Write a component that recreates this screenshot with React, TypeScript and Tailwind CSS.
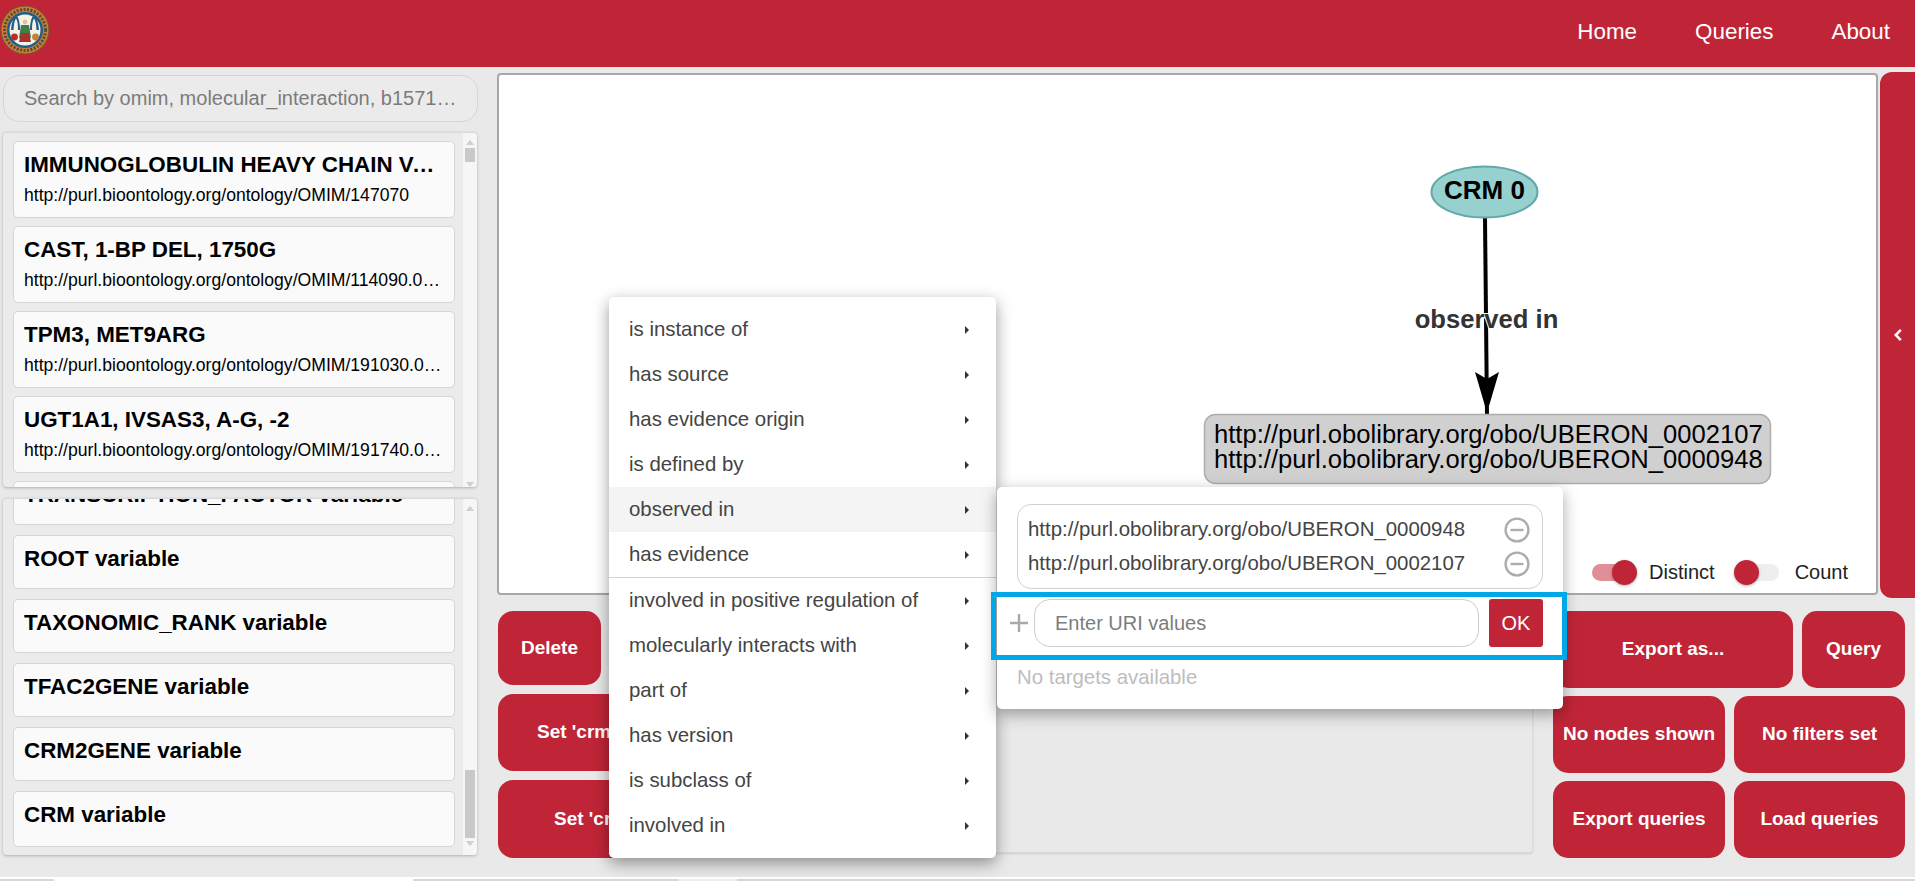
const menuTop = ["is instance of", "has source", "has evidence origin", "is defined by", "observed in", "has evidence"];
const menuBottom = [
  "involved in positive regulation of",
  "molecularly interacts with",
  "part of",
  "has version",
  "is subclass of",
  "involved in",
];

const ontologyItems = [
  { title: "IMMUNOGLOBULIN HEAVY CHAIN VARIABLE REGION", uri: "http://purl.bioontology.org/ontology/OMIM/147070" },
  { title: "CAST, 1-BP DEL, 1750G", uri: "http://purl.bioontology.org/ontology/OMIM/114090.0003" },
  { title: "TPM3, MET9ARG", uri: "http://purl.bioontology.org/ontology/OMIM/191030.0001" },
  { title: "UGT1A1, IVSAS3, A-G, -2", uri: "http://purl.bioontology.org/ontology/OMIM/191740.0008" },
];

const variables = ["ROOT", "TAXONOMIC_RANK", "TFAC2GENE", "CRM2GENE"];

const Logo = () => (
  <svg width="50" height="50" viewBox="0 0 50 50" className="mt-[-8px] shrink-0">
    <circle cx="25" cy="25" r="24" fill="#c4803a" stroke="#7d5228" strokeWidth="1" />
    <circle cx="25" cy="25" r="20.5" fill="none" stroke="#5c4a30" strokeWidth="3" strokeDasharray="2 1.5" />
    <circle cx="25" cy="25" r="18" fill="#1d5f8a" />
    <circle cx="25" cy="25" r="15.5" fill="#f6f2e6" />
    <path d="M11 25 Q12 13 16 10 Q20 13 20 25 Z" fill="#1d5f8a" />
    <path d="M30 25 Q30 13 34 10 Q38 13 39 25 Z" fill="#1d5f8a" />
    <path d="M13.5 25 Q14 16 16 13.5 Q18 16 18 25 Z" fill="#f6f2e6" />
    <path d="M32 25 Q32 16 34 13.5 Q36 16 36.5 25 Z" fill="#f6f2e6" />
    <circle cx="25" cy="17" r="2.4" fill="#e6c39a" />
    <path d="M21 20 L29 20 L31 33 L19 33 Z" fill="#3f7d4a" />
    <path d="M21 28 L29 28 L31 37 L19 37 Z" fill="#a8322e" />
    <circle cx="14.5" cy="32" r="3.4" fill="#b5302c" />
    <circle cx="35.5" cy="32" r="3.4" fill="#c4803a" />
  </svg>
);

const Scrollbar = ({ thumb, spacer }: { thumb: string; spacer: string }) => (
  <div className="w-[14px] shrink-0 bg-[#f6f6f6] flex flex-col items-center">
    <svg width="8" height="5" viewBox="0 0 8 5" className="mt-[7px] shrink-0">
      <path d="M4 0 L8 5 L0 5 Z" fill="#cfcfcf" />
    </svg>
    <div className={"w-[10px] bg-[#c9c9c9] shrink-0 " + thumb}></div>
    <div className={spacer}></div>
    <svg width="8" height="5" viewBox="0 0 8 5" className="shrink-0">
      <path d="M0 0 L8 0 L4 5 Z" fill="#cfcfcf" />
    </svg>
  </div>
);

const RedButton = ({ label, className }: { label: string; className: string }) => (
  <button className={"bg-[#c02537] text-white font-bold text-[19px] rounded-[15px] " + className}>{label}</button>
);

const Toggle = ({ on }: { on: boolean }) => (
  <div className="relative w-[45px] h-[25px] shrink-0">
    <div
      className={
        on
          ? "absolute left-0 top-[4px] w-[42px] h-[17px] rounded-full bg-[#e08e98]"
          : "absolute right-0 top-[4px] w-[42px] h-[17px] rounded-full bg-[#eeeeee]"
      }
    ></div>
    <div
      className={
        on
          ? "absolute right-0 top-0 w-[25px] h-[25px] rounded-full bg-[#c02537] shadow-[0_1px_3px_rgba(0,0,0,0.3)]"
          : "absolute left-0 top-0 w-[25px] h-[25px] rounded-full bg-[#c02537] shadow-[0_1px_3px_rgba(0,0,0,0.3)]"
      }
    ></div>
  </div>
);

const MenuRow = ({ label, active }: { label: string; active?: boolean }) => (
  <div
    className={
      active
        ? "h-[45px] flex items-center justify-between pl-[20px] pr-[27px] bg-[#f4f4f4]"
        : "h-[45px] flex items-center justify-between pl-[20px] pr-[27px]"
    }
  >
    <span>{label}</span>
    <svg width="4" height="8" viewBox="0 0 4 8">
      <path d="M0 0 L4 4 L0 8 Z" fill="#333333" />
    </svg>
  </div>
);

const MinusCircle = () => (
  <svg width="26" height="26" viewBox="0 0 26 26" fill="none" stroke="#adadad" strokeWidth="2.4">
    <circle cx="13" cy="13" r="11.4" />
    <path d="M6.5 13 H19.5" />
  </svg>
);

const Graph = () => (
  <svg width="1377" height="518" viewBox="499 75 1377 518" className="block">
    <path d="M1485 218 L1487 415" stroke="#000000" strokeWidth="4" fill="none" />
    <path d="M1475 372 L1487 379 L1499 372 L1489 406 L1485 406 Z" fill="#000000" />
    <ellipse cx="1484.5" cy="192" rx="53" ry="25.5" fill="#96d1d0" stroke="#62a8a7" strokeWidth="2" />
    <text x="1484.5" y="199" textAnchor="middle" fontSize="26" fontWeight="700" fill="#000000" fontFamily="'Liberation Sans', Arial, sans-serif">
      CRM 0
    </text>
    <text
      x="1486.5"
      y="328"
      textAnchor="middle"
      fontSize="25.6"
      fontWeight="700"
      fill="#333333"
      stroke="#ffffff"
      strokeWidth="2"
      paintOrder="stroke"
      fontFamily="'Liberation Sans', Arial, sans-serif"
    >
      observed in
    </text>
    <rect x="1204.5" y="414.5" width="566" height="69" rx="11" fill="#d0d0d0" stroke="#adadad" strokeWidth="1.5" />
    <text x="1214" y="443" fontSize="25.6" fill="#000000" fontFamily="'Liberation Sans', Arial, sans-serif">
      http://purl.obolibrary.org/obo/UBERON_0002107
    </text>
    <text x="1214" y="468" fontSize="25.6" fill="#000000" fontFamily="'Liberation Sans', Arial, sans-serif">
      http://purl.obolibrary.org/obo/UBERON_0000948
    </text>
  </svg>
);

export default function App() {
  return (
    <div className="relative w-[1915px] h-[881px] overflow-hidden bg-[#e9e9e9] font-['Liberation_Sans',Arial,sans-serif] text-black">
      <header className="h-[67px] bg-[#c02537] flex items-center justify-between pr-[25px]">
        <Logo />
        <nav className="flex gap-[58px] text-white text-[22.4px] mt-[-3px]">
          <a>Home</a>
          <a>Queries</a>
          <a>About</a>
        </nav>
      </header>

      <div className="h-[810px] flex">
        {/* left column: search + two lists */}
        <aside className="w-[497px] shrink-0 pl-[3px] pr-[20px] pt-[8px] flex flex-col">
          <input
            readOnly
            placeholder="Search by omim, molecular_interaction, b1571…"
            className="h-[47px] w-[475px] rounded-[16px] border border-[#d6d6d6] bg-[#ebebeb] pl-[20px] pr-[8px] text-[20px] outline-none placeholder:text-[#7b7b7b]"
          />
          <div className="mt-[10px] h-[355px] flex rounded-[4px] border-t border-[#dadada] bg-[#ebebeb] shadow-[0_1px_3px_rgba(0,0,0,0.25)] overflow-hidden">
            <div className="flex-1 min-w-0 pl-[10px] pr-[8px] pt-[8px] flex flex-col gap-[8px] overflow-hidden">
              {ontologyItems.map((item) => (
                <div
                  key={item.uri}
                  className="h-[77px] shrink-0 rounded-[5px] border border-[#d5d5d5] bg-[#fafafa] px-[10px] pt-[10px]"
                >
                  <div className="truncate text-[22.4px] font-bold leading-[26px]">{item.title}</div>
                  <div className="truncate mt-[5px] text-[17.6px] leading-[24px]">{item.uri}</div>
                </div>
              ))}
              <div className="h-[77px] shrink-0 rounded-[5px] border border-[#d5d5d5] bg-[#fafafa]"></div>
            </div>
            <Scrollbar thumb="mt-[3px] h-[14px]" spacer="flex-1" />
          </div>

          <div className="mt-[11px] h-[357px] flex rounded-[4px] border-t border-[#dadada] bg-[#ebebeb] shadow-[0_1px_3px_rgba(0,0,0,0.25)] overflow-hidden">
            <div className="flex-1 min-w-0 pl-[10px] pr-[8px] flex flex-col gap-[10px] overflow-hidden">
              <div className="mt-[-28px] h-[54px] shrink-0 rounded-[5px] border border-[#d5d5d5] bg-[#fafafa] px-[10px] pt-[10px] text-[22.4px] font-bold leading-[26px]">
                TRANSCRIPTION_FACTOR variable
              </div>
              {variables.map((name) => (
                <div
                  key={name}
                  className="h-[54px] shrink-0 rounded-[5px] border border-[#d5d5d5] bg-[#fafafa] px-[10px] pt-[10px] text-[22.4px] font-bold leading-[26px]"
                >
                  {name} variable
                </div>
              ))}
              <div className="h-[56px] shrink-0 rounded-[5px] border border-[#d5d5d5] bg-[#fafafa] px-[10px] pt-[10px] text-[22.4px] font-bold leading-[26px]">
                CRM variable
              </div>
            </div>
            <Scrollbar thumb="mt-[259px] h-[68px]" spacer="mt-[3px]" />
          </div>
        </aside>

        {/* graph + buttons */}
        <main className="flex-1 min-w-0 flex flex-col">
          <div className="h-[538px] shrink-0 flex items-start pt-[5px]">
            <div className="relative mt-[1px] w-[1381px] h-[522px] box-border rounded-[4px] border-2 border-[#a8a8a8] bg-white">
              <Graph />
              <div className="absolute right-[28px] bottom-[8px] flex items-center text-[20px] leading-[25px] text-[#222222]">
                <Toggle on />
                <span className="ml-[12px] mr-[19px]">Distinct</span>
                <Toggle on={false} />
                <span className="ml-[16px]">Count</span>
              </div>
            </div>
            <div className="ml-[2px] w-[35px] h-[526px] rounded-l-[12px] bg-[#c02537] flex items-center justify-center">
              <svg width="18" height="18" viewBox="0 0 16 16" fill="none" stroke="#ffffff" strokeWidth="2.2">
                <path d="M10.5 3.5 L6 8 L10.5 12.5" />
              </svg>
            </div>
          </div>

          <div className="flex items-start">
            <div className="ml-[1px] w-[210px] shrink-0 pt-[6px] flex flex-col">
              <RedButton label="Delete" className="h-[74px] w-[103px]" />
              <RedButton label="Set 'crm' as subject" className="mt-[9px] h-[77px] w-full text-left pl-[39px] whitespace-nowrap overflow-hidden" />
              <RedButton label="Set 'crm' as object" className="mt-[9px] h-[78px] w-full text-left pl-[56px] whitespace-nowrap overflow-hidden" />
            </div>
            <div className="ml-[8px] w-[817px] h-[248px] shrink-0 rounded-[4px] border border-[#dcdcdc] bg-[#e9e9e9] shadow-[0_1px_2px_rgba(0,0,0,0.12)]"></div>
            <div className="ml-[20px] w-[352px] shrink-0 pt-[6px] flex flex-col gap-[8px]">
              <div className="flex gap-[9px]">
                <RedButton label="Export as..." className="h-[77px] w-[240px]" />
                <RedButton label="Query" className="h-[77px] w-[103px]" />
              </div>
              <div className="flex gap-[9px]">
                <RedButton label="No nodes shown" className="h-[77px] w-[172px] whitespace-nowrap" />
                <RedButton label="No filters set" className="h-[77px] w-[171px]" />
              </div>
              <div className="flex gap-[9px]">
                <RedButton label="Export queries" className="h-[77px] w-[172px]" />
                <RedButton label="Load queries" className="h-[77px] w-[171px]" />
              </div>
            </div>
          </div>
        </main>
      </div>

      {/* bottom edge of the page below */}
      <div className="h-[4px] border-t-2 border-white bg-gradient-to-r from-[#d6d6d6] via-[#d8d6da] to-[#ded4d0] flex">
        <div className="ml-[54px] w-[359px] bg-white"></div>
        <div className="ml-[265px] w-[59px] bg-[#eeeeee]"></div>
      </div>

      {/* context menu */}
      <div className="absolute left-[609px] top-[297px] w-[387px] h-[561px] rounded-[5px] bg-white pt-[10px] text-[20.4px] text-[#444444] shadow-[0_5px_16px_rgba(0,0,0,0.4)]">
        {menuTop.map((m) => (
          <MenuRow key={m} label={m} active={m === "observed in"} />
        ))}
        <div className="h-px bg-[#d4d4d4]"></div>
        {menuBottom.map((m) => (
          <MenuRow key={m} label={m} />
        ))}
      </div>

      {/* submenu for "observed in" */}
      <div className="absolute left-[997px] top-[487px] w-[566px] h-[222px] rounded-[5px] bg-white px-[20px] pt-[17px] text-[20.4px] text-[#444444] shadow-[0_5px_16px_rgba(0,0,0,0.35)]">
        <div className="h-[85px] rounded-[14px] border border-[#d2d2d2] flex flex-col justify-center pl-[10px] pr-[12px]">
          <div className="h-[34px] flex items-center justify-between">
            <span>http://purl.obolibrary.org/obo/UBERON_0000948</span>
            <MinusCircle />
          </div>
          <div className="h-[34px] flex items-center justify-between">
            <span>http://purl.obolibrary.org/obo/UBERON_0002107</span>
            <MinusCircle />
          </div>
        </div>
        <div className="mt-[10px] flex items-center">
          <svg width="18" height="18" viewBox="0 0 18 18" stroke="#a9a9a9" strokeWidth="2.4" className="ml-[-7px] shrink-0">
            <path d="M0 9 H18 M9 0 V18" />
          </svg>
          <input
            readOnly
            placeholder="Enter URI values"
            className="ml-[6px] w-[445px] h-[48px] rounded-[16px] border border-[#cccccc] bg-white pl-[20px] text-[20px] outline-none placeholder:text-[#7d7d7d]"
          />
          <button className="ml-[10px] w-[54px] h-[48px] rounded-[3px] bg-[#c02537] text-white text-[20px]">OK</button>
        </div>
        <div className="mt-[18px] leading-[24px] text-[#bdbdbd]">No targets available</div>
        <div className="absolute left-[-6px] top-[105px] w-[576px] h-[68px] border-[5px] border-[#00a8e8] pointer-events-none"></div>
      </div>
    </div>
  );
}
